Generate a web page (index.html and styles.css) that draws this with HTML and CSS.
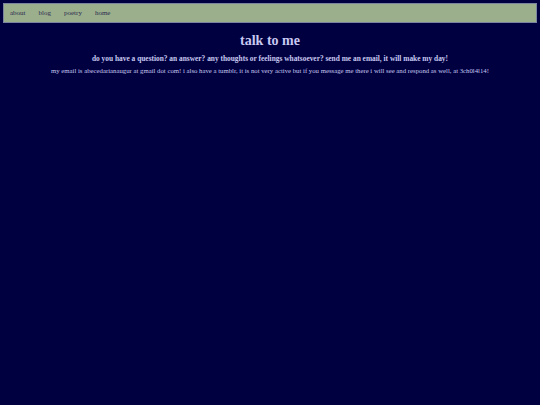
FILE: index.html
```html
<!DOCTYPE html>
<html>
<head>
	<meta charset="UTF-8">
	<title>talk to me</title>
	<link rel="stylesheet" href="styles.css">
</head>
<body>
	<div class="nav">
		<a class="nav-link" href="#">about</a>
		<a class="nav-link" href="#">blog</a>
		<a class="nav-link" href="#">poetry</a>
		<a class="nav-link" href="#">home</a>
	</div>
	<div class="content">
		<h1 class="title">talk to me</h1>
		<p class="lead">do you have a question? an answer? any thoughts or feelings whatsoever? send me an email, it will make my day!</p>
		<p class="text">my email is abecedarianaugur at gmail dot com! i also have a tumblr, it is not very active but if you message me there i will see and respond as well, at 3ch0l4l14!</p>
	</div>
</body>
</html>
```

FILE: styles.css
```css
body {
	background-color: #000040;
	margin: 3px;
	font-family: "Liberation Serif", serif;
	color: #c8c8f0;
}
.nav {
	background-color: #9caf8c;
	border: 1px solid #7a86a0;
	height: 18px;
	display: flex;
	align-items: center;
	padding-left: 6px;
}
.nav-link {
	color: #2a2a50;
	text-decoration: none;
	font-size: 7px;
	margin-right: 13px;
}
.content {
	text-align: center;
}
.title {
	font-size: 14px;
	margin: 10px 0 5px;
}
.lead {
	font-weight: bold;
	font-size: 7.4px;
	margin: 0 0 4px;
}
.text {
	font-size: 6.75px;
	margin: 0;
}
```
